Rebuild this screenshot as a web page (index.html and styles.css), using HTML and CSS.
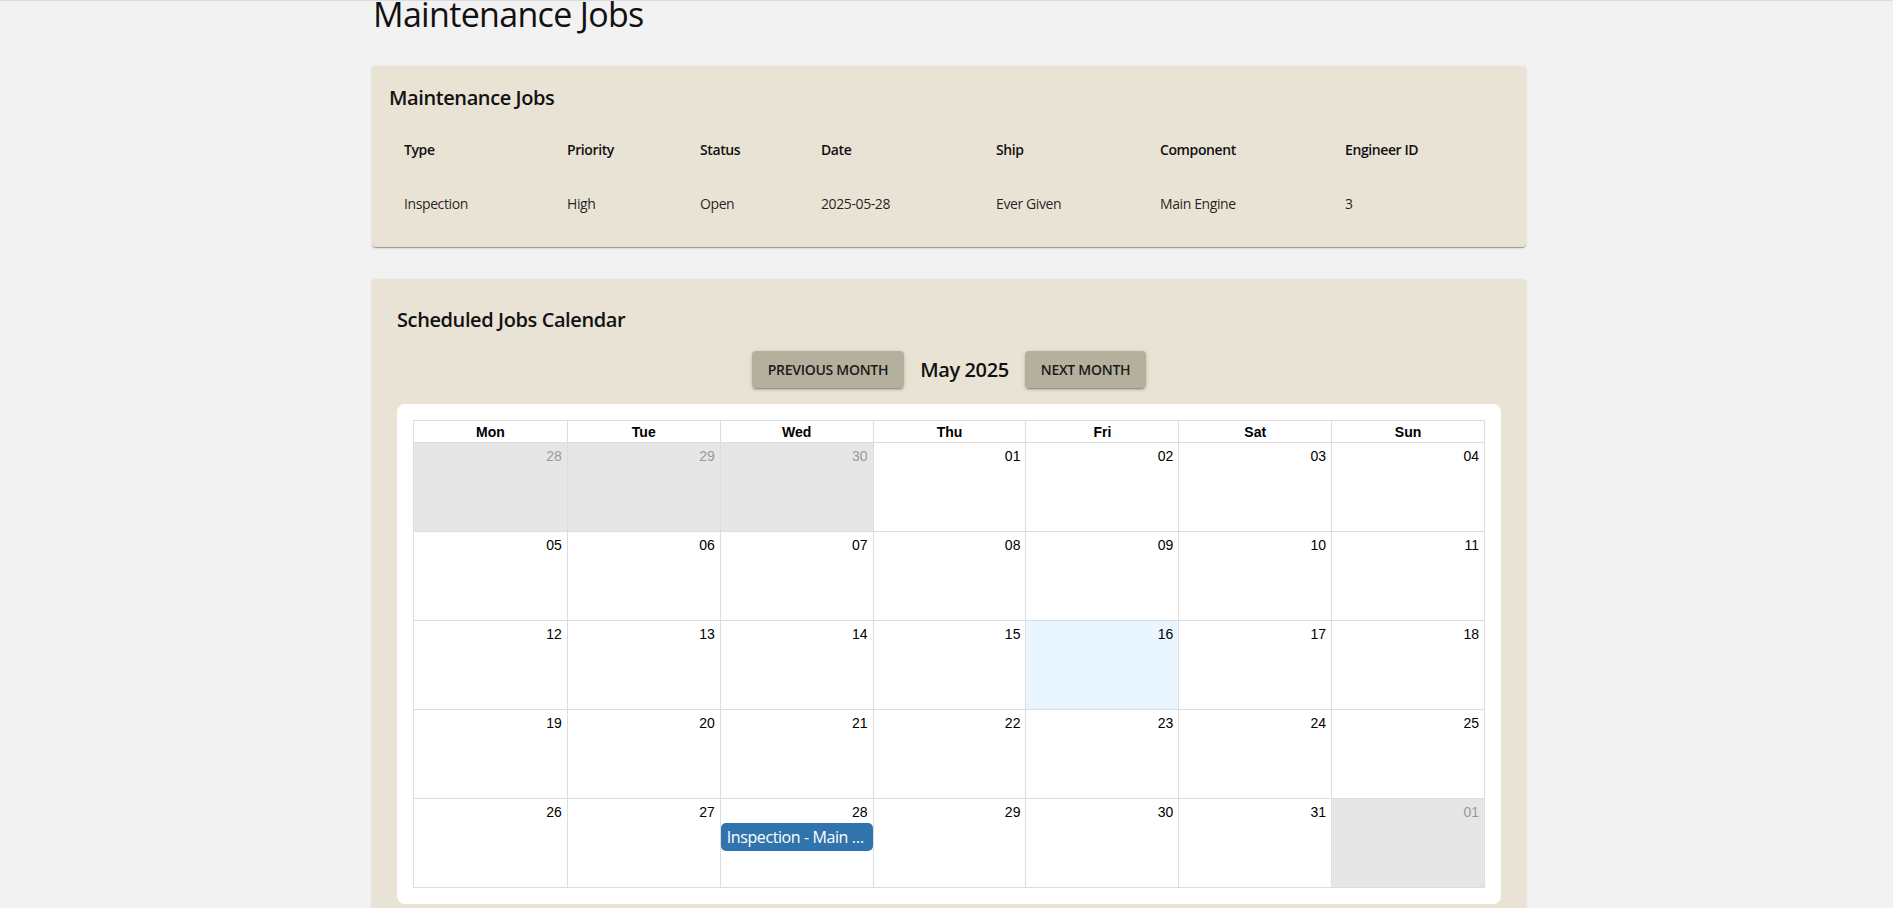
FILE: index.html
```html
<!DOCTYPE html>
<html lang="en">
<head>
<meta charset="utf-8">
<title>Maintenance Jobs</title>
<link rel="stylesheet" href="styles.css">
</head>
<body>
<div class="page">
  <h1 class="page-title">Maintenance Jobs</h1>

  <section class="card card-jobs">
    <h2 class="card-title">Maintenance Jobs</h2>
    <table class="jobs">
      <colgroup>
        <col class="c-type"><col class="c-priority"><col class="c-status"><col class="c-date"><col class="c-ship"><col class="c-component"><col class="c-engineer">
      </colgroup>
      <thead>
        <tr><th>Type</th><th>Priority</th><th>Status</th><th>Date</th><th>Ship</th><th>Component</th><th>Engineer ID</th></tr>
      </thead>
      <tbody>
        <tr><td>Inspection</td><td>High</td><td>Open</td><td>2025-05-28</td><td>Ever Given</td><td>Main Engine</td><td>3</td></tr>
      </tbody>
    </table>
  </section>

  <section class="card card-cal">
    <h2 class="card-title">Scheduled Jobs Calendar</h2>
    <div class="nav">
      <button class="nav-btn" type="button">Previous Month</button>
      <span class="month">May 2025</span>
      <button class="nav-btn" type="button">Next Month</button>
    </div>
    <div class="cal-wrap">
      <div class="cal">
        <div class="cal-head">Mon</div><div class="cal-head">Tue</div><div class="cal-head">Wed</div><div class="cal-head">Thu</div><div class="cal-head">Fri</div><div class="cal-head">Sat</div><div class="cal-head">Sun</div>

        <div class="day off"><span class="num">28</span></div>
        <div class="day off"><span class="num">29</span></div>
        <div class="day off"><span class="num">30</span></div>
        <div class="day"><span class="num">01</span></div>
        <div class="day"><span class="num">02</span></div>
        <div class="day"><span class="num">03</span></div>
        <div class="day"><span class="num">04</span></div>

        <div class="day"><span class="num">05</span></div>
        <div class="day"><span class="num">06</span></div>
        <div class="day"><span class="num">07</span></div>
        <div class="day"><span class="num">08</span></div>
        <div class="day"><span class="num">09</span></div>
        <div class="day"><span class="num">10</span></div>
        <div class="day"><span class="num">11</span></div>

        <div class="day"><span class="num">12</span></div>
        <div class="day"><span class="num">13</span></div>
        <div class="day"><span class="num">14</span></div>
        <div class="day"><span class="num">15</span></div>
        <div class="day today"><span class="num">16</span></div>
        <div class="day"><span class="num">17</span></div>
        <div class="day"><span class="num">18</span></div>

        <div class="day"><span class="num">19</span></div>
        <div class="day"><span class="num">20</span></div>
        <div class="day"><span class="num">21</span></div>
        <div class="day"><span class="num">22</span></div>
        <div class="day"><span class="num">23</span></div>
        <div class="day"><span class="num">24</span></div>
        <div class="day"><span class="num">25</span></div>

        <div class="day"><span class="num">26</span></div>
        <div class="day"><span class="num">27</span></div>
        <div class="day"><span class="num">28</span><div class="event">Inspection - Main Engine</div></div>
        <div class="day"><span class="num">29</span></div>
        <div class="day"><span class="num">30</span></div>
        <div class="day"><span class="num">31</span></div>
        <div class="day off"><span class="num">01</span></div>
      </div>
    </div>
  </section>
</div>
</body>
</html>
```

FILE: styles.css
```css
* { box-sizing: border-box; }

html, body {
  margin: 0;
  padding: 0;
}

body {
  background: #f2f2f2;
  border-top: 1px solid #dcdcdc;
  font-family: "Open Sans", "Noto Sans", "DejaVu Sans", sans-serif;
  color: rgba(0, 0, 0, 0.87);
  letter-spacing: -0.025em;
}

.page {
  width: 1159px;
  margin: 0 auto;
  padding-left: 5px;
}

.page-title {
  margin: 0 0 39px 1px;
  font-size: 34px;
  line-height: 26px;
  font-weight: 400;
  letter-spacing: -0.02em;
  color: #111;
}

.card {
  background: #e9e3d5;
  border-radius: 4px;
  box-shadow: 0 2px 1px -1px rgba(0,0,0,0.2), 0 1px 1px 0 rgba(0,0,0,0.14), 0 1px 3px 0 rgba(0,0,0,0.12);
}

.card-jobs {
  padding: 16px 16px 17px;
  margin-bottom: 32px;
}

.card-title {
  margin: 0;
  font-size: 20px;
  line-height: 32px;
  font-weight: 600;
  color: #111;
}

.card-jobs .card-title {
  margin-left: 1px;
  margin-bottom: 10px;
}

.jobs {
  width: 100%;
  border-collapse: collapse;
  table-layout: fixed;
  font-size: 14px;
  line-height: 20px;
}

.c-type { width: 163px; }
.c-priority { width: 133px; }
.c-status { width: 121px; }
.c-date { width: 175px; }
.c-ship { width: 164px; }
.c-component { width: 185px; }

.jobs th,
.jobs td {
  padding: 16px;
  text-align: left;
  border-bottom: 1px solid #e0e0e0;
  white-space: nowrap;
}

.jobs td {
  padding-top: 17px;
  padding-bottom: 15px;
}

.jobs th {
  font-weight: 600;
  color: #111;
}

.card-cal {
  padding: 25px 25px 24px;
}

.nav {
  display: flex;
  justify-content: center;
  align-items: center;
  gap: 16px;
  margin: 15px 0 16px;
}

.nav-btn {
  font-family: inherit;
  letter-spacing: -0.02em;
  font-size: 14px;
  line-height: 25px;
  font-weight: 600;
  text-transform: uppercase;
  color: rgba(0, 0, 0, 0.87);
  background: #b5af9e;
  border: 0;
  border-radius: 4px;
  padding: 6px 16px;
  box-shadow: 0 3px 1px -2px rgba(0,0,0,0.2), 0 2px 2px 0 rgba(0,0,0,0.14), 0 1px 5px 0 rgba(0,0,0,0.12);
}

.month {
  font-size: 20px;
  line-height: 32px;
  font-weight: 600;
  color: #111;
}

.cal-wrap {
  background: #ffffff;
  border-radius: 8px;
  padding: 16px;
}

.cal {
  display: grid;
  grid-template-columns: repeat(7, 1fr);
  grid-template-rows: 21px repeat(5, 89px);
  border: 1px solid #ddd;
  font-family: "Liberation Sans", Arial, sans-serif;
  letter-spacing: 0;
  font-size: 14px;
  color: #000;
}

.cal > :not(:nth-child(7n+1)) {
  border-left: 1px solid #ddd;
}

.cal-head {
  text-align: center;
  font-weight: 700;
  line-height: 16px;
  padding: 3px 3px 2px;
}

.day {
  border-top: 1px solid #ddd;
  padding-top: 5px;
  min-width: 0;
  display: flex;
  flex-direction: column;
}

.day.off {
  background: #e6e6e6;
  color: #999;
}

.day.today {
  background: #eaf6ff;
}

.num {
  display: block;
  text-align: right;
  line-height: 16px;
  padding-right: 5px;
}

.event {
  margin-top: 3px;
  background: #3174ad;
  color: #fff;
  border-radius: 5px;
  padding: 2px 5px 2px 6px;
  font-family: "Open Sans", "Noto Sans", sans-serif;
  letter-spacing: -0.025em;
  font-size: 16px;
  line-height: 24px;
  white-space: nowrap;
  overflow: hidden;
  text-overflow: ellipsis;
}
```
